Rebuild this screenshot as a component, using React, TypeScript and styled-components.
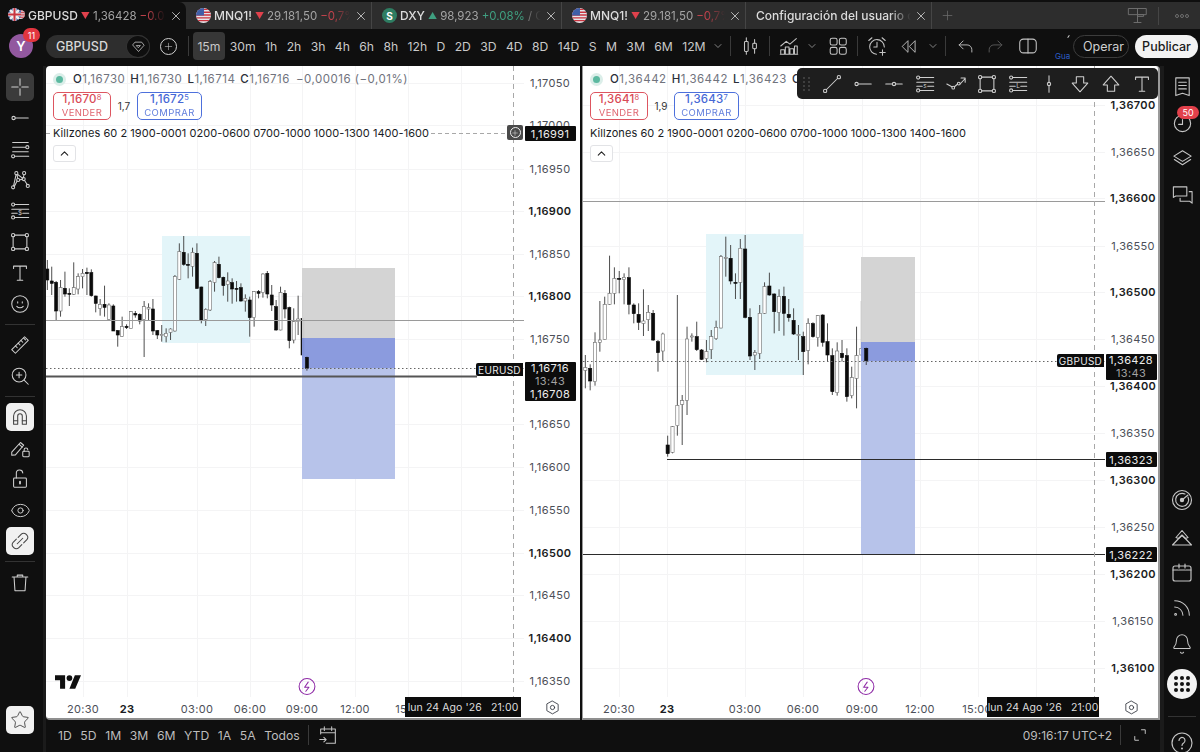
import React, { useId } from "react";
import styled, { createGlobalStyle } from "styled-components";
import { ChevronDown, ChevronUp, X, Plus, Star, Eye, Bell, Rss } from "lucide-react";

const GlobalStyle = createGlobalStyle`
  html, body {
    margin: 0;
    padding: 0;
    background: #0f0f0f;
    overflow: hidden;
  }
  * {
    box-sizing: border-box;
  }
`;

const Page = styled.div`
  width: 1200px;
  height: 752px;
  display: flex;
  flex-direction: column;
  background: #0f0f0f;
  font-family: Inter, "Liberation Sans", sans-serif;
  color: #d6d6d6;
  overflow: hidden;
`;

/* ---------- tabs ---------- */

const TabBar = styled.div`
  height: 29px;
  flex: none;
  display: flex;
  align-items: stretch;
  background: #2d2d2d;
  border-top: 2px solid #0f0f0f;
`;

const Tab = styled.div<{ $w: number; $active?: boolean }>`
  width: ${({ $w }) => $w}px;
  flex: none;
  display: flex;
  align-items: center;
  gap: 3px;
  padding: 0 3px 0 ${({ $active }) => ($active ? 8 : 10)}px;
  font-size: 12px;
  font-weight: 500;
  white-space: nowrap;
  position: relative;
  background: ${({ $active }) => ($active ? "#0f0f0f" : "transparent")};
  border-top-right-radius: ${({ $active }) => ($active ? "7px" : "0")};
  border-right: ${({ $active }) => ($active ? "none" : "1px solid #454545")};
`;

const TabText = styled.div`
  flex: 1;
  min-width: 0;
  overflow: hidden;
  display: flex;
  gap: 3px;
  align-items: center;
  color: #d0d0d0;
  -webkit-mask-image: linear-gradient(to right, #000 86%, transparent 100%);
  mask-image: linear-gradient(to right, #000 86%, transparent 100%);
`;

const TabSymbol = styled.span`
  color: #dcdcdc;
`;

const TabPrice = styled.span`
  color: #a4a4a4;
  font-weight: 400;
  font-size: 11.5px;
`;

const TabChange = styled.span<{ $up?: boolean }>`
  color: ${({ $up }) => ($up ? "#3f9f80" : "#c4434d")};
  font-weight: 400;
  font-size: 11.5px;
`;

const Arrow = styled.span<{ $up?: boolean }>`
  font-size: 9px;
  color: ${({ $up }) => ($up ? "#3f9f80" : "#e0414c")};
`;

const TabClose = styled.div`
  flex: none;
  display: flex;
  color: #d4d4d4;
`;

const TabAdd = styled.div`
  width: 30px;
  display: flex;
  align-items: center;
  justify-content: center;
  color: #6c6c6c;
`;

const TabBarEnd = styled.div`
  margin-left: auto;
  display: flex;
  align-items: center;
  color: #6f6f6f;
`;

const TabBarDivider = styled.div`
  width: 1px;
  height: 18px;
  background: #454545;
  margin: 0 16px 0 10px;
`;

const MoreDots = styled.div`
  display: flex;
  gap: 1px;
  margin-right: 11px;
`;

const MoreDot = styled.span`
  width: 4px;
  height: 4px;
  border: 1px solid #6f6f6f;
  border-radius: 50%;
`;

const CoinRow = styled.div`
  position: relative;
  flex: none;
  width: 17px;
  height: 17px;
`;

const CoinBack = styled.div`
  position: absolute;
  right: 0;
  top: 0;
`;

const CoinFront = styled.div`
  position: absolute;
  left: 0;
  bottom: 0;
`;

const DollarCoin = styled.div`
  width: 15px;
  height: 15px;
  flex: none;
  border-radius: 50%;
  background: #2e7d62;
  color: #fff;
  font-size: 10px;
  font-weight: 700;
  display: flex;
  align-items: center;
  justify-content: center;
`;

/* ---------- top toolbar ---------- */

const Toolbar = styled.div`
  height: 34px;
  flex: none;
  display: flex;
  align-items: center;
  padding: 0 4px 0 9px;
  margin-bottom: 3px;
`;

const AvatarWrap = styled.div`
  position: relative;
  width: 24px;
  height: 24px;
  flex: none;
  margin-right: 13px;
`;

const Avatar = styled.div`
  width: 24px;
  height: 24px;
  border-radius: 50%;
  background: #92589f;
  color: #fff;
  font-size: 13px;
  font-weight: 600;
  display: flex;
  align-items: center;
  justify-content: center;
`;

const AvatarBadge = styled.div`
  position: absolute;
  top: -6px;
  left: 14px;
  width: 17px;
  height: 14px;
  border-radius: 7px;
  background: #e2353f;
  color: #fff;
  font-size: 9px;
  display: flex;
  align-items: center;
  justify-content: center;
`;

const SymbolPill = styled.div`
  width: 104px;
  height: 23px;
  flex: none;
  display: flex;
  align-items: center;
  justify-content: space-between;
  border-radius: 12px;
  background: #2e2e2e;
  padding-left: 10px;
  font-size: 12.5px;
  font-weight: 500;
  color: #d8d8d8;
`;

const SymbolGem = styled.div`
  width: 24px;
  height: 23px;
  border-radius: 50%;
  background: #0f0f0f;
  border: 1px solid #333;
  display: flex;
  align-items: center;
  justify-content: center;
  color: #d8d8d8;
`;

const AddCircle = styled.div`
  width: 17px;
  height: 17px;
  border: 1px solid #d0d0d0;
  border-radius: 50%;
  margin: 0 11px 0 10px;
  flex: none;
  display: flex;
  align-items: center;
  justify-content: center;
  color: #d0d0d0;
`;

const Separator = styled.div<{ $gap?: number }>`
  width: 1px;
  height: 20px;
  flex: none;
  background: #3a3a3a;
  margin: 0 ${({ $gap }) => $gap ?? 4}px;
`;

const Frames = styled.div`
  display: flex;
  align-items: center;
  margin-left: 4px;
`;

const Frame = styled.div<{ $on?: boolean }>`
  height: 28px;
  display: flex;
  align-items: center;
  padding: 0 ${({ $on }) => ($on ? "4.4px" : "4.4px")};
  border-radius: 4px;
  font-size: 12.2px;
  color: #c9c9c9;
  white-space: nowrap;
  background: ${({ $on }) => ($on ? "#373737" : "transparent")};
  & + & {
    margin-left: 0.6px;
  }
`;

const ToolIcon = styled.div<{ $w?: number; $ml?: number; $faded?: boolean }>`
  width: ${({ $w }) => $w ?? 30}px;
  height: 28px;
  flex: none;
  margin-left: ${({ $ml }) => $ml ?? 0}px;
  display: flex;
  align-items: center;
  justify-content: center;
  color: ${({ $faded }) => ($faded ? "#5c5c5c" : "#c4c4c4")};
`;

const SmallChevron = styled(ChevronDown)`
  color: #a8a8a8;
`;

const GuideMark = styled.div`
  width: 18px;
  margin-left: 12px;
  height: 30px;
  position: relative;
  flex: none;
  display: flex;
  align-items: flex-end;
  color: #2c5ec9;
  font-size: 8px;
`;

const GuideTick = styled.span`
  position: absolute;
  top: 4px;
  right: 4px;
  width: 1px;
  height: 3px;
  background: #cfcfcf;
  transform: rotate(35deg);
`;

const TradeButton = styled.div`
  margin-left: auto;
  height: 23px;
  padding: 0 9px;
  display: flex;
  align-items: center;
  border: 1px solid #3c3c3c;
  border-radius: 12px;
  font-size: 12.5px;
  color: #cfcfcf;
  width: 56px;
  flex: none;
`;

const PublishButton = styled.div`
  margin-left: 6px;
  width: 63px;
  height: 23px;
  display: flex;
  align-items: center;
  justify-content: center;
  border-radius: 12px;
  background: #f3f3f3;
  font-size: 12.5px;
  font-weight: 500;
  color: #1a1a1a;
  flex: none;
`;

/* ---------- body ---------- */

const Body = styled.div`
  flex: 1;
  min-height: 0;
  display: flex;
`;

const LeftRail = styled.div`
  width: 46px;
  flex: none;
  display: flex;
  flex-direction: column;
  align-items: center;
  gap: 3px;
  padding: 7px 3px 18px 0;
  border-right: 3px solid #1b1b1b;
`;

const RailButton = styled.div<{ $state?: "dark" | "light" }>`
  width: 28px;
  height: 28px;
  flex: none;
  display: flex;
  align-items: center;
  justify-content: center;
  border-radius: 5px;
  color: ${({ $state }) => ($state === "light" ? "#444" : "#cfcfcf")};
  background: ${({ $state }) =>
    $state === "light" ? "#f1f1f1" : $state === "dark" ? "#3b3b3b" : "transparent"};
`;

const RailLine = styled.div`
  width: 30px;
  height: 1px;
  flex: none;
  margin: 3px 0;
  background: #333;
`;

const RailBottom = styled.div`
  margin-top: auto;
`;

const Center = styled.div`
  width: 1114px;
  flex: none;
  display: flex;
  flex-direction: column;
`;

const Charts = styled.div`
  height: 654px;
  flex: none;
  display: flex;
  gap: 2px;
`;

const Pane = styled.div<{ $w: number; $axis: number; $framed?: boolean }>`
  width: ${({ $w }) => $w}px;
  flex: none;
  position: relative;
  display: grid;
  grid-template-columns: 1fr ${({ $axis }) => $axis}px;
  grid-template-rows: 1fr 21px;
  background: #fff;
  color: #131722;
  border-bottom: 2px solid #8f8f8f;
  border-left: ${({ $framed }) => ($framed ? "1px solid #9a9a9a" : "none")};
  border-right: ${({ $framed }) => ($framed ? "2px solid #9a9a9a" : "none")};
  border-radius: ${({ $framed }) => ($framed ? "0 4px 0 0" : "4px 0 0 4px")};
`;

const Plot = styled.div`
  position: relative;
  min-width: 0;
  overflow: hidden;
`;

const PlotSvg = styled.svg`
  display: block;
  width: 100%;
  height: 100%;
`;

const Legend = styled.div`
  position: absolute;
  left: 0;
  top: 0;
  right: 0;
  padding: 4px 0 0 7px;
  display: flex;
  flex-direction: column;
  align-items: flex-start;
`;

const OhlcRow = styled.div`
  height: 18px;
  display: flex;
  align-items: center;
  white-space: nowrap;
  font-size: 11.5px;
  letter-spacing: 0.5px;
  color: #70737d;
`;

const StatusDot = styled.span`
  width: 13px;
  height: 13px;
  border-radius: 50%;
  background: #5cb9a0;
  border: 3px solid #dbeee9;
  margin-right: 7px;
  flex: none;
`;

const OhlcKey = styled.b`
  font-weight: 500;
  color: #2a2e39;
  margin-left: 5px;
  &:first-of-type {
    margin-left: 0;
  }
`;

const OhlcChange = styled.span`
  margin-left: 6px;
`;

const TradeRow = styled.div`
  display: flex;
  align-items: center;
  margin-top: 4px;
  height: 28px;
`;

const QuoteBox = styled.div<{ $buy?: boolean }>`
  width: ${({ $buy }) => ($buy ? 65 : 58)}px;
  height: 28px;
  border: 1px solid ${({ $buy }) => ($buy ? "#4d70dc" : "#dd5560")};
  border-radius: 5px;
  color: ${({ $buy }) => ($buy ? "#4668d6" : "#d94a56")};
  display: flex;
  flex-direction: column;
  align-items: center;
  justify-content: center;
  font-size: 11.5px;
  font-weight: 500;
  letter-spacing: 0.2px;
  line-height: 13px;
  background: #fff;
`;

const QuoteTail = styled.sup`
  font-size: 7.5px;
  line-height: 0;
  font-weight: 400;
  vertical-align: 3px;
`;

const QuoteLabel = styled.span`
  font-size: 9.5px;
  font-weight: 400;
  letter-spacing: 0.4px;
  opacity: 0.85;
`;

const Spread = styled.span`
  width: 26px;
  text-align: center;
  font-size: 10px;
  color: #333;
`;

const StudyRow = styled.div`
  margin-top: 5px;
  height: 16px;
  display: flex;
  align-items: center;
  font-size: 11px;
  letter-spacing: 0.05px;
  color: #191c24;
  white-space: nowrap;
`;

const CollapseButton = styled.div`
  margin-top: 4px;
  width: 23px;
  height: 17px;
  border: 1px solid #e2e3e6;
  border-radius: 3px;
  background: #fff;
  display: flex;
  align-items: center;
  justify-content: center;
  color: #222;
`;

const PriceAxis = styled.div`
  position: relative;
  min-width: 0;
`;

const PriceLabel = styled.div<{ $bold?: boolean; $nudge: number }>`
  position: absolute;
  left: ${({ $nudge }) => Math.max($nudge, 0)}px;
  right: ${({ $nudge }) => Math.max(-$nudge, 0)}px;
  text-align: center;
  transform: translateY(-50%);
  font-size: 11px;
  letter-spacing: 0.35px;
  line-height: 14px;
  font-weight: ${({ $bold }) => ($bold ? 600 : 400)};
  color: ${({ $bold }) => ($bold ? "#1a1c22" : "#4c4f58")};
`;

const PriceTag = styled.div`
  position: absolute;
  left: 0.5px;
  width: 51px;
  height: 15px;
  background: #0c0c0c;
  color: #ececec;
  font-size: 11px;
  letter-spacing: 0.35px;
  display: flex;
  align-items: center;
  justify-content: center;
  border-radius: 1px;
`;

const PriceStack = styled.div`
  position: absolute;
  left: 0.5px;
  width: 51px;
  background: #0c0c0c;
  color: #ececec;
  font-size: 11px;
  letter-spacing: 0.35px;
  line-height: 13px;
  padding: 0;
  text-align: center;
  border-radius: 1px;
`;

const StackDim = styled.div`
  color: #a3a3a3;
`;

const SymbolTag = styled.div`
  position: absolute;
  right: 1px;
  width: 47px;
  height: 13px;
  background: #0c0c0c;
  color: #e8e8e8;
  font-size: 10px;
  letter-spacing: 0.3px;
  display: flex;
  align-items: center;
  justify-content: center;
  border-radius: 2px 0 0 2px;
`;

const CrossPlus = styled.div`
  position: absolute;
  right: 1px;
  top: 59px;
  width: 16px;
  height: 15px;
  background: #4a4a4a;
  border-radius: 2px;
  display: flex;
  align-items: center;
  justify-content: center;
  color: #eee;
`;

const CrossPlusRing = styled.div`
  width: 11px;
  height: 11px;
  border: 1px solid #eee;
  border-radius: 50%;
  display: flex;
  align-items: center;
  justify-content: center;
`;

const PlotMark = styled.div`
  position: absolute;
  bottom: 1px;
  transform: translateX(-50%);
  display: flex;
  color: #8e2aa6;
`;

const LogoMark = styled.div`
  position: absolute;
  left: 9px;
  bottom: 8px;
  display: flex;
  color: #101010;
`;

const TimeAxis = styled.div`
  position: relative;
  min-width: 0;
`;

const TimeLabel = styled.div<{ $bold?: boolean }>`
  position: absolute;
  top: 5px;
  transform: translateX(-50%);
  font-size: 11px;
  letter-spacing: 0.3px;
  line-height: 14px;
  white-space: nowrap;
  font-weight: ${({ $bold }) => ($bold ? 700 : 400)};
  color: ${({ $bold }) => ($bold ? "#1a1c22" : "#4c4f58")};
`;

const TimeTag = styled.div`
  position: absolute;
  top: 0;
  height: 20px;
  background: #0c0c0c;
  color: #dedede;
  font-size: 10.5px;
  letter-spacing: 0.1px;
  display: flex;
  align-items: center;
  justify-content: center;
  gap: 9px;
  white-space: nowrap;
`;

const AxisCorner = styled.div`
  display: flex;
  align-items: center;
  justify-content: center;
  color: #33363f;
`;

const FloatingBar = styled.div`
  position: absolute;
  right: 0;
  top: 2px;
  width: 361px;
  height: 31px;
  display: flex;
  align-items: center;
  padding-left: 6px;
  border-radius: 5px;
  background: #1e1e1e;
  color: #cfcfcf;
  z-index: 2;
`;

const Grip = styled.div`
  width: 9px;
  margin-right: 4px;
  display: grid;
  grid-template-columns: 2px 2px;
  gap: 2px 3px;
`;

const GripDot = styled.span`
  width: 2px;
  height: 2px;
  background: #4a4a4a;
  border-radius: 50%;
`;

const FloatingItem = styled.div`
  width: 31px;
  height: 31px;
  flex: none;
  display: flex;
  align-items: center;
  justify-content: center;
`;

const BottomBar = styled.div`
  flex: 1;
  display: flex;
  align-items: center;
  padding: 0 5px 2px 12px;
  color: #bdbdbd;
  font-size: 12.2px;
`;

const Range = styled.span`
  margin-right: 8.6px;
`;

const BottomClock = styled.span`
  margin-left: auto;
  margin-right: 4px;
  font-size: 12px;
`;

const RightRail = styled.div`
  width: 40px;
  flex: none;
  display: flex;
  flex-direction: column;
  align-items: center;
  padding-top: 2px;
  border-left: 4px solid #1b1b1b;
  color: #c6c6c6;
  overflow: hidden;
`;

const SideIcon = styled.div`
  width: 34px;
  height: 36px;
  flex: none;
  position: relative;
  display: flex;
  align-items: center;
  justify-content: center;
`;

const SideBadge = styled.div`
  position: absolute;
  top: 2px;
  right: 0;
  width: 22px;
  height: 13px;
  border-radius: 7px;
  background: #e2404b;
  color: #fff;
  font-size: 9px;
  display: flex;
  align-items: center;
  justify-content: center;
`;

const SideBottom = styled.div`
  margin-top: auto;
  display: flex;
  flex-direction: column;
  align-items: center;
  margin-bottom: -9px;
`;

const GridButton = styled.div`
  width: 30px;
  height: 30px;
  margin-top: 7px;
  border-radius: 50%;
  background: #f2f2f2;
  display: grid;
  grid-template-columns: repeat(3, 4px);
  gap: 2px;
  align-content: center;
  justify-content: center;
`;

const GridDot = styled.span`
  width: 4px;
  height: 4px;
  border-radius: 50%;
  background: #111;
`;

const SideLine = styled.div`
  width: 28px;
  height: 1px;
  background: #333;
  margin: 17px 0 8px;
`;

/* ---------- icons ---------- */

const Ico = ({ size = 22, sw = 1.15, children }: { size?: number; sw?: number; children: React.ReactNode }) => (
  <svg width={size} height={size} viewBox="0 0 24 24" fill="none" stroke="currentColor" strokeWidth={sw} strokeLinecap="round" strokeLinejoin="round">
    {children}
  </svg>
);

const CrossIcon = () => (
  <Ico><path d="M12 3v7M12 14v7M3 12h7M14 12h7" /></Ico>
);
const RayIcon = () => (
  <Ico><circle cx="5" cy="12" r="1.8" /><path d="M7 12h14" /></Ico>
);
const MidLineIcon = () => (
  <Ico><circle cx="12" cy="12" r="1.8" /><path d="M3 12h7M14 12h7" /></Ico>
);
const ChannelIcon = () => (
  <Ico>
    <path d="M4 5h17M4 10h14M4 15h17M6.5 20h15" />
    <circle cx="20" cy="10" r="1.7" />
    <circle cx="4.5" cy="20" r="1.7" />
  </Ico>
);
const PatternIcon = () => (
  <Ico>
    <circle cx="4.5" cy="20" r="1.7" /><circle cx="8" cy="4.5" r="1.7" /><circle cx="10" cy="12" r="1.7" />
    <circle cx="16.5" cy="4.5" r="1.7" /><circle cx="16" cy="11" r="1.7" /><circle cx="20.5" cy="18.5" r="1.7" />
    <path d="M5 18.4 7.7 6.2M8.7 6 9.6 10.4M5.800 19 8.800 13.200M11.600 11.800l2.800-.5M15.600 9.400l.8-3.200M17 12.500 19.800 17M9.500 6l5.600 4.200" />
  </Ico>
);
const FibIcon = ({ letter = "$" }: { letter?: string }) => (
  <Ico>
    <circle cx="4.5" cy="5" r="1.7" /><circle cx="4.5" cy="19" r="1.7" />
    <path d="M6.5 5h15M3 10h18.5M3 14.5h6M15 14.5h6.5M6.5 19h15" />
    <text x="12" y="16.8" fontSize="7" textAnchor="middle" fill="currentColor" stroke="none" fontFamily="Inter, sans-serif">{letter}</text>
  </Ico>
);
const RectIcon = () => (
  <Ico>
    <circle cx="4.5" cy="4.5" r="1.8" /><circle cx="19.5" cy="4.5" r="1.8" />
    <circle cx="4.5" cy="19.5" r="1.8" /><circle cx="19.5" cy="19.5" r="1.8" />
    <path d="M6.3 4.5h11.400M6.300 19.500h11.400M4.500 6.300v11.400M19.500 6.300v11.400" />
  </Ico>
);
const TextIcon = () => (
  <Ico><path d="M5 7V4.5h14V7M12 4.5v15.5M9 20h6" /></Ico>
);
const SmileIcon = () => (
  <Ico>
    <circle cx="12" cy="12" r="9" />
    <path d="M8.5 14.5c1.8 2.2 5.2 2.2 7 0M9.5 9.5v1.5M14.5 9.5v1.5" />
  </Ico>
);
const RulerIcon = () => (
  <Ico>
    <path d="m3 17 14-14 4 4L7 21z" />
    <path d="m7 13 2 2M10 10l2 2M13 7l2 2M16 4.5l2 2" />
  </Ico>
);
const ZoomIcon = () => (
  <Ico>
    <circle cx="11" cy="11" r="7.5" />
    <path d="m16.5 16.5 4.5 4.5M11 8v6M8 11h6" />
  </Ico>
);
const MagnetIcon = () => (
  <Ico>
    <path d="M5 20V11a7 7 0 0 1 14 0v9h-4.5v-9a2.5 2.5 0 0 0-5 0v9z" />
    <path d="M5 16h4.5M14.5 16H19" />
  </Ico>
);
const PencilLockIcon = () => (
  <Ico>
    <path d="m3 16.5 9.500-10.500 3.500 3L7 19.500l-4 .5z" />
    <path d="M11 8l3.500 3" />
    <rect x="15" y="15.5" width="7" height="6" rx="1" />
    <path d="M16.5 15.5V14a2 2 0 0 1 4 0" />
  </Ico>
);
const LockOpenIcon = () => (
  <Ico>
    <rect x="5" y="11" width="14" height="10" rx="1" />
    <path d="M8 11V6a3.5 3.5 0 0 1 7-.5" />
    <path d="M12 15v2" strokeWidth="2" />
  </Ico>
);
const LinkIcon = () => (
  <Ico>
    <path d="m10 8 3.500-3.500a3.500 3.500 0 0 1 5 0l1 1a3.500 3.500 0 0 1 0 5L16 14" />
    <path d="m14 16-3.500 3.500a3.500 3.500 0 0 1-5 0l-1-1a3.500 3.500 0 0 1 0-5L8 10" />
    <path d="m9 15 6-6" />
  </Ico>
);
const TrashIcon = () => (
  <Ico>
    <path d="M3.5 6.5h17M9 6.5V4.5h6v2M5.5 6.5l1 15h11l1-15" />
  </Ico>
);
const ListBookIcon = () => (
  <Ico size={23}>
    <path d="M5 21.5V3h14v18.5l-7-2.500z" />
    <path d="M8 7.5h8M8 11h8M8 14.5h8" />
  </Ico>
);
const TimerIcon = () => (
  <Ico size={23}>
    <circle cx="12" cy="13" r="8.5" />
    <path d="M12 9v5H8" />
  </Ico>
);
const LayersIcon = () => (
  <Ico size={23}>
    <path d="m12 4 9 5.500-9 5.500-9-5.500z" />
    <path d="m3.500 13 8.500 5.500 8.500-5.500" />
  </Ico>
);
const ChatIcon = () => (
  <Ico size={23}>
    <path d="M16.5 13.5V4H2.500v11l2.500-1.500z" />
    <path d="M19 9h3v12l-2.500-2H9.500v-3" />
  </Ico>
);
const RadarIcon = () => (
  <Ico size={24}>
    <circle cx="12" cy="12" r="9.5" />
    <path d="M18 9a6.500 6.500 0 1 1-3-3" />
    <path d="m12 12 6-5" />
    <circle cx="12" cy="12" r="1.6" fill="currentColor" />
  </Ico>
);
const PyramidIcon = () => (
  <Ico size={24}>
    <path d="M2.500 21 12 11l9.500 10zM2.500 21h19" />
    <path d="m6 13.500 6-7 6 7-2.500 1-3.500-3-3.500 3z" />
  </Ico>
);
const CalendarIcon = () => (
  <Ico size={24}>
    <rect x="3" y="6" width="18" height="15" rx="2" />
    <path d="M3 10h5M16 10h5M9 4v4M15 4v4M9 10h6" />
  </Ico>
);
const HelpIcon = () => (
  <Ico size={24}>
    <circle cx="12" cy="12" r="10" />
    <path d="M9 9.500a3 3 0 1 1 4.600 2.500c-1 .6-1.600 1.200-1.600 2.500" />
    <path d="M12 17.500v.1" strokeWidth="2" />
  </Ico>
);
const GemIcon = () => (
  <Ico size={15}>
    <path d="M7 5h10l4 5-9 10-9-10z" />
    <path d="M9 10.500h6l-3 3z" />
  </Ico>
);
const MonitorIcon = () => (
  <Ico size={21} sw={1.1}>
    <rect x="2" y="4" width="20" height="7" />
    <path d="M12 4v16M8 20h8M12 11h7v2h-7" />
  </Ico>
);
const CandlesIcon = () => (
  <Ico>
    <rect x="6" y="7" width="4" height="11" rx="1" />
    <path d="M8 3v4M8 18v3" />
    <rect x="15" y="9" width="4" height="6" rx="1" />
    <path d="M17 5v4M17 15v5" />
  </Ico>
);
const IndicatorIcon = () => (
  <Ico>
    <path d="m3 12 6-5 4 3 7-6" />
    <path d="M3 21v-5h4v5M8 21v-8h4v8M13 21v-6h4v6M18 21v-9h3v9M2.500 21h19" />
  </Ico>
);
const LayoutIcon = () => (
  <Ico>
    <rect x="3.500" y="3.500" width="7.500" height="7.500" rx="2" />
    <rect x="13.500" y="3.500" width="7.500" height="7.500" rx="2" />
    <rect x="3.500" y="13.500" width="7.500" height="7.500" rx="2" />
    <rect x="13.500" y="13.500" width="7.500" height="7.500" rx="2" />
  </Ico>
);
const AlarmIcon = () => (
  <Ico>
    <path d="M20 13a8 8 0 1 0-8.500 8" />
    <path d="M12 8v5H8.500M3 6l3.500-3M21 6l-3.500-3M18 16v6M15 19h6" />
  </Ico>
);
const RewindIcon = () => (
  <Ico size={19}>
    <path d="m11 5-7 7 7 7zM20 5l-7 7 7 7z" />
  </Ico>
);
const UndoIcon = () => (
  <Ico size={19}>
    <path d="M9 5 4 10l5 5M4 10h10a6 6 0 0 1 6 6v3" />
  </Ico>
);
const RedoIcon = () => (
  <Ico size={19}>
    <path d="m15 5 5 5-5 5M20 10H10a6 6 0 0 0-6 6v3" />
  </Ico>
);
const SplitIcon = () => (
  <Ico>
    <rect x="3" y="4.500" width="18" height="15" rx="4" />
    <path d="M12 4.500v15" />
  </Ico>
);
const MenuChevron = () => <SmallChevron size={12} strokeWidth={1.5} />;
const RangeCalendarIcon = () => (
  <Ico>
    <path d="M4 11V5.500h16V21H10M4 9.500h16M8 3v4M16 3v4M3 17h7M7.500 14.500 10 17l-2.500 2.500" />
  </Ico>
);
const ExpandIcon = () => (
  <Ico size={18} sw={1.3}><path d="M14 5h5v5M5 14v5h5" /></Ico>
);
const GearIcon = () => (
  <Ico size={17} sw={1.2}>
    <path d="m12 3 8 4.500v9L12 21l-8-4.500v-9z" />
    <circle cx="12" cy="12" r="3" />
  </Ico>
);
const BoltIcon = () => (
  <Ico size={19} sw={1.3}>
    <circle cx="12" cy="12" r="10" />
    <path d="m13.500 6.500-4.500 6.500h5.500l-4 5" />
  </Ico>
);
const DownIcon = () => (
  <Ico><path d="M8 4h8v7h4.500L12 20.500 3.500 11H8z" /></Ico>
);
const UpIcon = () => (
  <Ico><path d="M8 20h8v-7h4.500L12 3.500 3.500 13H8z" /></Ico>
);
const TrendLineIcon = () => (
  <Ico>
    <circle cx="4.500" cy="19.500" r="1.800" /><circle cx="19.500" cy="4.500" r="1.800" />
    <path d="M6 18 18 6" />
  </Ico>
);
const ZigzagIcon = () => (
  <Ico>
    <circle cx="9" cy="16" r="1.500" /><circle cx="15" cy="11.500" r="1.500" />
    <path d="m2 12 5.500 3M10.300 15l3.500-3M16.500 12 22 6M17.500 5.500H22V10" />
  </Ico>
);
const VLineIcon = () => (
  <Ico><path d="M12 3v7M12 14v7" /><circle cx="12" cy="12" r="1.800" /></Ico>
);
const TvLogo = () => (
  <svg width="26" height="14" viewBox="0 0 36 19" fill="currentColor">
    <path d="M14 19H7V7H0V0h14v19zM28 19h-8L27.500 0h8.500L28 19z" />
    <circle cx="20" cy="4" r="4" />
  </svg>
);

const FlagUS = ({ size = 15 }: { size?: number }) => {
  const id = useId();
  return (
    <svg width={size} height={size} viewBox="0 0 16 16">
      <clipPath id={id}><circle cx="8" cy="8" r="8" /></clipPath>
      <g clipPath={`url(#${id})`}>
        <rect width="16" height="16" fill="#e6e6ea" />
        <path d="M0 1.500h16M0 4.500h16M0 7.500h16M0 10.500h16M0 13.500h16" stroke="#c9343f" strokeWidth="1.500" />
        <rect width="8.500" height="8" fill="#3f5fa8" />
      </g>
    </svg>
  );
};

const FlagUK = ({ size = 13 }: { size?: number }) => {
  const id = useId();
  return (
    <svg width={size} height={size} viewBox="0 0 16 16">
      <clipPath id={id}><circle cx="8" cy="8" r="8" /></clipPath>
      <g clipPath={`url(#${id})`}>
        <rect width="16" height="16" fill="#2f4e96" />
        <path d="M0 0 16 16M16 0 0 16" stroke="#eee" strokeWidth="3" />
        <path d="M8 0v16M0 8h16" stroke="#eee" strokeWidth="5" />
        <path d="M8 0v16M0 8h16" stroke="#c9343f" strokeWidth="2.500" />
      </g>
    </svg>
  );
};

/* ---------- chart data ---------- */

type Candle = [number, number, number, number, number];

const leftCandles: Candle[] = [
  [105, 132, 165, 195, 1], [125, 168, 175, 210, 1], [168, 172, 258, 288, 1], [165, 188, 258, 275, 0],
  [140, 190, 207, 215, 1], [190, 205, 207, 243, 1], [112, 188, 208, 210, 0], [145, 155, 192, 208, 0],
  [132, 145, 155, 190, 0], [128, 142, 146, 210, 1], [133, 143, 212, 215, 1], [212, 213, 235, 262, 1],
  [222, 238, 250, 272, 0], [182, 238, 247, 275, 1], [235, 240, 284, 285, 0], [238, 243, 318, 318, 1],
  [315, 317, 330, 365, 1], [275, 305, 334, 335, 0], [298, 304, 308, 312, 1], [258, 260, 310, 310, 0],
  [258, 265, 270, 278, 1], [265, 268, 288, 298, 1], [228, 245, 284, 396, 0], [235, 248, 252, 285, 0],
  [222, 252, 318, 330, 1], [315, 317, 330, 342, 1], [300, 328, 332, 350, 0], [310, 325, 335, 352, 0],
  [310, 312, 322, 345, 0], [150, 155, 318, 320, 0], [55, 80, 163, 165, 0], [33, 82, 118, 122, 1],
  [85, 118, 121, 160, 1], [68, 82, 124, 155, 0], [55, 85, 190, 192, 1], [185, 186, 285, 295, 1],
  [250, 253, 283, 303, 0], [165, 170, 255, 258, 0], [108, 113, 172, 200, 0], [95, 118, 158, 160, 1],
  [155, 157, 182, 212, 1], [142, 168, 178, 230, 0], [160, 173, 192, 236, 1], [168, 190, 192, 230, 1],
  [175, 188, 228, 230, 1], [208, 220, 228, 260, 0], [215, 225, 278, 335, 1], [198, 200, 278, 305, 0],
  [195, 200, 205, 220, 1], [145, 147, 203, 218, 0], [138, 145, 207, 220, 1], [180, 210, 240, 258, 1],
  [225, 245, 315, 317, 1], [185, 203, 315, 316, 0], [195, 205, 252, 280, 1], [245, 248, 347, 370, 1],
  [250, 290, 345, 355, 0], [212, 282, 290, 330, 0], [203, 280, 390, 400, 1], [395, 397, 430, 437, 1],
];

const rightCandles: Candle[] = [
  [390, 428, 436, 490, 0], [418, 430, 468, 496, 1], [322, 352, 470, 482, 0], [228, 345, 352, 380, 0],
  [215, 238, 344, 345, 0], [92, 205, 238, 240, 0], [127, 160, 205, 238, 0], [138, 160, 163, 205, 1],
  [145, 157, 164, 238, 0], [127, 158, 238, 268, 1], [235, 240, 266, 295, 1], [235, 268, 292, 315, 1],
  [193, 288, 295, 333, 0], [240, 262, 284, 318, 0], [255, 265, 345, 348, 1], [345, 350, 383, 440, 1],
  [323, 327, 378, 408, 0], [632, 660, 686, 695, 1], [603, 605, 682, 685, 0], [210, 541, 602, 632, 0],
  [510, 527, 538, 660, 0], [305, 342, 526, 570, 0], [325, 333, 335, 350, 0], [290, 335, 374, 378, 1],
  [372, 375, 403, 405, 1], [345, 380, 401, 412, 0], [315, 335, 373, 402, 0], [287, 307, 341, 345, 0],
  [90, 95, 309, 310, 0], [35, 97, 100, 155, 0], [60, 100, 168, 178, 1], [145, 172, 175, 222, 1],
  [42, 70, 172, 222, 0], [30, 72, 277, 280, 1], [250, 277, 393, 405, 1], [375, 383, 390, 435, 0],
  [240, 265, 385, 402, 0], [172, 185, 265, 267, 0], [143, 183, 210, 212, 1], [205, 207, 260, 325, 1],
  [193, 215, 262, 318, 0], [185, 214, 265, 332, 1], [222, 268, 278, 290, 1], [250, 286, 327, 330, 1],
  [300, 328, 332, 405, 0], [320, 335, 380, 450, 1], [280, 295, 376, 418, 0], [292, 296, 335, 338, 1],
  [270, 272, 338, 365, 0], [268, 270, 352, 365, 1], [295, 350, 390, 408, 1], [370, 392, 500, 510, 1],
  [352, 378, 503, 512, 0], [345, 385, 398, 410, 1], [370, 392, 515, 530, 1], [425, 458, 512, 520, 0],
  [305, 392, 460, 550, 0], [228, 370, 390, 392, 0], [368, 370, 407, 420, 1],
];

interface Rect { x: number; y: number; w: number; h: number; fill: string }
interface HLine { y: number; from: number; to: number; color: string; width?: number; dash?: string }
interface ChartConfig {
  x: number;
  width: number;
  axis: number;
  framed?: boolean;
  plotEnd: number;
  nudge: number;
  quote: { sell: string; sellTail: string; buy: string; buyTail: string; spread: string };
  ohlc: [string, string, string, string, string];
  candles: Candle[];
  candleOrigin: { base: number; x: number; step: number; width: number };
  prices: { y: number; text: string; bold?: boolean }[];
  times: { x: number; text: string; bold?: boolean }[];
  grid: number[];
  rects: Rect[];
  lines: HLine[];
  crossX: number;
  tagX: number;
  tagWidth: number;
  boltX: number;
  priceTags: { y: number; text: string }[];
  stack: { y: number; rows: string[] };
  symbol: { y: number; text: string };
  logo?: boolean;
  crossY?: number;
}

const leftPrices = [
  [83, "1,17050"], [125, "1,17000"], [169, "1,16950"], [211, "1,16900", 1], [254, "1,16850"],
  [296, "1,16800", 1], [339, "1,16750"], [424, "1,16650"], [467, "1,16600"], [510, "1,16550"],
  [553, "1,16500", 1], [595, "1,16450"], [638, "1,16400", 1], [681, "1,16350"],
] as [number, string, number?][];

const rightPrices = [
  [105, "1,36700", 1], [152, "1,36650"], [198, "1,36600", 1], [246, "1,36550"], [292, "1,36500", 1],
  [339, "1,36450"], [386, "1,36400", 1], [433, "1,36350"], [480, "1,36300", 1], [527, "1,36250"],
  [574, "1,36200", 1], [621, "1,36150"], [668, "1,36100", 1],
] as [number, string, number?][];

const toPrices = (rows: [number, string, number?][]) =>
  rows.map(([y, text, bold]) => ({ y, text, bold: !!bold }));

const leftChart: ChartConfig = {
  x: 46,
  width: 534,
  axis: 56,
  plotEnd: 524,
  nudge: -4,
  quote: { sell: "1,1670", sellTail: "8", buy: "1,1672", buyTail: "5", spread: "1,7" },
  ohlc: ["1,16730", "1,16730", "1,16714", "1,16716", "−0,00016 (−0,01%)"],
  candles: leftCandles,
  candleOrigin: { base: 40, x: 22, step: 13.2, width: 3 },
  prices: toPrices(leftPrices),
  times: [
    { x: 83, text: "20:30" }, { x: 127, text: "23", bold: true }, { x: 197, text: "03:00" },
    { x: 250, text: "06:00" }, { x: 302, text: "09:00" }, { x: 355, text: "12:00" }, { x: 410, text: "15:00" },
  ],
  grid: [83, 127, 197, 250, 302, 355, 408, 461],
  rects: [
    { x: 162, y: 236, w: 88, h: 107, fill: "#e3f5f9" },
    { x: 302, y: 268, w: 93, h: 70, fill: "#d3d3d3" },
    { x: 302, y: 338, w: 93, h: 30, fill: "#8798dd" },
    { x: 302, y: 368, w: 93, h: 111, fill: "#b5c1e9" },
  ],
  lines: [
    { y: 320, from: 46, to: 524, color: "#9a9a9a" },
    { y: 368, from: 46, to: 524, color: "#666", dash: "1.5 2.5" },
    { y: 376, from: 46, to: 477, color: "#555", width: 2 },
    { y: 133, from: 46, to: 52, color: "#a8a8a8", dash: "4 3" },
    { y: 133, from: 431, to: 513, color: "#a8a8a8", dash: "4 3" },
  ],
  crossX: 513,
  tagX: 405,
  tagWidth: 116,
  boltX: 307,
  priceTags: [{ y: 126, text: "1,16991" }],
  stack: { y: 362, rows: ["1,16716", "13:43", "1,16708"] },
  symbol: { y: 363, text: "EURUSD" },
  logo: true,
  crossY: 133,
};

const rightChart: ChartConfig = {
  x: 583,
  width: 578,
  axis: 53,
  framed: true,
  plotEnd: 1105,
  nudge: 3,
  quote: { sell: "1,3641", sellTail: "8", buy: "1,3643", buyTail: "7", spread: "1,9" },
  ohlc: ["1,36442", "1,36442", "1,36423", "1,36428", "−0,00014 (−0,01%)"],
  candles: rightCandles,
  candleOrigin: { base: 582, x: 10, step: 14.53, width: 3.2 },
  prices: toPrices(rightPrices),
  times: [
    { x: 619, text: "20:30" }, { x: 667, text: "23", bold: true }, { x: 745, text: "03:00" },
    { x: 803, text: "06:00" }, { x: 862, text: "09:00" }, { x: 920, text: "12:00" }, { x: 977, text: "15:00" },
  ],
  grid: [619, 667, 745, 803, 862, 920, 978, 1036],
  rects: [
    { x: 706, y: 234, w: 97, h: 141, fill: "#e3f5f9" },
    { x: 861, y: 257, w: 54, h: 85, fill: "#d3d3d3" },
    { x: 861, y: 342, w: 54, h: 19, fill: "#8798dd" },
    { x: 861, y: 361, w: 54, h: 194, fill: "#b5c1e9" },
  ],
  lines: [
    { y: 201, from: 583, to: 1105, color: "#9a9a9a" },
    { y: 361, from: 583, to: 1105, color: "#666", dash: "1.5 2.5" },
    { y: 459, from: 667, to: 1105, color: "#2b2b2b" },
    { y: 554, from: 583, to: 1105, color: "#2b2b2b" },
  ],
  crossX: 1094,
  tagX: 987,
  tagWidth: 112,
  boltX: 866,
  priceTags: [{ y: 452, text: "1,36323" }, { y: 547, text: "1,36222" }],
  stack: { y: 354, rows: ["1,36428", "13:43"] },
  symbol: { y: 354, text: "GBPUSD" },
};

const TOP = 66;
const PLOT_HEIGHT = 631;

const Candles = ({ data, from, config }: { data: Candle[]; from: number; config: ChartConfig }) => {
  const { base, x: originX, step, width } = config.candleOrigin;
  return (
    <g>
      {data.map(([hi, top, bot, lo, dark], i) => {
        const x = base + (originX + step * (from + i)) / 3;
        const toY = (v: number) => 225 + v / 3;
        return (
          <g key={i}>
            <line x1={x} x2={x} y1={toY(hi)} y2={toY(lo)} stroke="#3a3a3a" strokeWidth="0.9" />
            <rect
              x={x - width / 2}
              y={toY(top)}
              width={width}
              height={Math.max(toY(bot) - toY(top), 1)}
              fill={dark ? "#0b0b0b" : "#ffffff"}
              stroke={dark ? "#0b0b0b" : "#6e6e6e"}
              strokeWidth="0.6"
            />
          </g>
        );
      })}
    </g>
  );
};

const ChartPane = ({ config, children }: { config: ChartConfig; children?: React.ReactNode }) => {
  const plotWidth = config.plotEnd - config.x;
  const last = config.candles.length - 1;
  return (
    <Pane $w={config.width} $axis={config.axis} $framed={config.framed}>
      <Plot>
        <PlotSvg viewBox={`${config.x} ${TOP} ${plotWidth} ${PLOT_HEIGHT}`} preserveAspectRatio="none">
          {config.prices.map((p) => (
            <line key={p.y} x1={config.x} x2={config.plotEnd} y1={p.y + 0.5} y2={p.y + 0.5} stroke="#f4f4f5" />
          ))}
          {config.grid.map((x) => (
            <line key={x} x1={x + 0.5} x2={x + 0.5} y1={TOP} y2={TOP + PLOT_HEIGHT} stroke="#f4f4f5" />
          ))}
          {config.rects.slice(0, 1).map((r) => (
            <rect key={r.x} x={r.x} y={r.y} width={r.w} height={r.h} fill={r.fill} />
          ))}
          <Candles data={config.candles} from={0} config={config} />
          {config.rects.slice(1).map((r) => (
            <rect key={r.y} x={r.x} y={r.y} width={r.w} height={r.h} fill={r.fill} fillOpacity="0.97" />
          ))}
          <Candles data={config.candles.slice(-1)} from={last} config={config} />
          {config.lines.map((l, i) => (
            <line
              key={i}
              x1={l.from}
              x2={l.to}
              y1={l.y + 0.5}
              y2={l.y + 0.5}
              stroke={l.color}
              strokeWidth={l.width ?? 1}
              strokeDasharray={l.dash}
            />
          ))}
          <line x1={config.crossX + 0.5} x2={config.crossX + 0.5} y1={TOP} y2={TOP + PLOT_HEIGHT} stroke="#a8a8a8" strokeDasharray="5 4" />
        </PlotSvg>
        {config.crossY && (
          <CrossPlus>
            <CrossPlusRing>
              <Plus size={8} strokeWidth={1.5} />
            </CrossPlusRing>
          </CrossPlus>
        )}
        <SymbolTag style={{ top: config.symbol.y - TOP }}>{config.symbol.text}</SymbolTag>
        <Legend>
          <OhlcRow>
            <StatusDot />
            <OhlcKey>O</OhlcKey>{config.ohlc[0]}
            <OhlcKey>H</OhlcKey>{config.ohlc[1]}
            <OhlcKey>L</OhlcKey>{config.ohlc[2]}
            <OhlcKey>C</OhlcKey>{config.ohlc[3]}
            <OhlcChange>{config.ohlc[4]}</OhlcChange>
          </OhlcRow>
          <TradeRow>
            <QuoteBox>
              <span>{config.quote.sell}<QuoteTail>{config.quote.sellTail}</QuoteTail></span>
              <QuoteLabel>VENDER</QuoteLabel>
            </QuoteBox>
            <Spread>{config.quote.spread}</Spread>
            <QuoteBox $buy>
              <span>{config.quote.buy}<QuoteTail>{config.quote.buyTail}</QuoteTail></span>
              <QuoteLabel>COMPRAR</QuoteLabel>
            </QuoteBox>
          </TradeRow>
          <StudyRow>Killzones 60 2 1900-0001 0200-0600 0700-1000 1000-1300 1400-1600</StudyRow>
          <CollapseButton>
            <ChevronUp size={13} strokeWidth={2} />
          </CollapseButton>
        </Legend>
        {config.logo && (
          <LogoMark>
            <TvLogo />
          </LogoMark>
        )}
        <PlotMark style={{ left: config.boltX - config.x }}>
          <BoltIcon />
        </PlotMark>
      </Plot>
      <PriceAxis>
        {config.prices.map((p) => (
          <PriceLabel key={p.y} $bold={p.bold} $nudge={config.nudge} style={{ top: p.y - TOP }}>
            {p.text}
          </PriceLabel>
        ))}
        {config.priceTags.map((t) => (
          <PriceTag key={t.y} style={{ top: t.y - TOP }}>
            {t.text}
          </PriceTag>
        ))}
        <PriceStack style={{ top: config.stack.y - TOP }}>
          {config.stack.rows.map((row, i) =>
            i === 1 ? <StackDim key={row}>{row}</StackDim> : <div key={row}>{row}</div>
          )}
        </PriceStack>
      </PriceAxis>
      <TimeAxis>
        {config.times.map((t) => (
          <TimeLabel key={t.x} $bold={t.bold} style={{ left: t.x - config.x }}>
            {t.text}
          </TimeLabel>
        ))}
        <TimeTag style={{ left: config.tagX - config.x, width: config.tagWidth }}>
          <span>lun 24 Ago '26</span>
          <span>21:00</span>
        </TimeTag>
      </TimeAxis>
      <AxisCorner>
        <GearIcon />
      </AxisCorner>
      {children}
    </Pane>
  );
};

const frames = ["15m", "30m", "1h", "2h", "3h", "4h", "6h", "8h", "12h", "D", "2D", "3D", "4D", "8D", "14D", "S", "M", "3M", "6M", "12M"];
const ranges = ["1D", "5D", "1M", "3M", "6M", "YTD", "1A", "5A", "Todos"];

const floatingTools = [
  <TrendLineIcon key="trend" />,
  <RayIcon key="ray" />,
  <MidLineIcon key="mid" />,
  <FibIcon key="fib" letter="s" />,
  <ZigzagIcon key="zig" />,
  <RectIcon key="rect" />,
  <FibIcon key="lines" letter="L" />,
  <VLineIcon key="vline" />,
  <DownIcon key="down" />,
  <UpIcon key="up" />,
  <TextIcon key="text" />,
];

function App() {
  return (
    <Page>
      <GlobalStyle />
      <TabBar>
        <Tab $w={186} $active>
          <CoinRow>
            <CoinBack><FlagUS size={9} /></CoinBack>
            <CoinFront><FlagUK /></CoinFront>
          </CoinRow>
          <TabText>
            <TabSymbol>GBPUSD</TabSymbol>
            <Arrow>▼</Arrow>
            <TabPrice>1,36428</TabPrice>
            <TabChange>−0.02%</TabChange>
          </TabText>
          <TabClose><X size={14} strokeWidth={1.4} /></TabClose>
        </Tab>
        <Tab $w={186}>
          <FlagUS />
          <TabText>
            <TabSymbol>MNQ1!</TabSymbol>
            <Arrow>▼</Arrow>
            <TabPrice>29.181,50</TabPrice>
            <TabChange>−0,7%</TabChange>
          </TabText>
          <TabClose><X size={14} strokeWidth={1.4} /></TabClose>
        </Tab>
        <Tab $w={190}>
          <DollarCoin>S</DollarCoin>
          <TabText>
            <TabSymbol>DXY</TabSymbol>
            <Arrow $up>▲</Arrow>
            <TabPrice>98,923</TabPrice>
            <TabChange $up>+0.08%</TabChange>
            <TabPrice>/ CL</TabPrice>
          </TabText>
          <TabClose><X size={14} strokeWidth={1.4} /></TabClose>
        </Tab>
        <Tab $w={184}>
          <FlagUS />
          <TabText>
            <TabSymbol>MNQ1!</TabSymbol>
            <Arrow>▼</Arrow>
            <TabPrice>29.181,50</TabPrice>
            <TabChange>−0,7%</TabChange>
          </TabText>
          <TabClose><X size={14} strokeWidth={1.4} /></TabClose>
        </Tab>
        <Tab $w={186}>
          <TabText>
            <TabSymbol>Configuración del usuario de T</TabSymbol>
          </TabText>
          <TabClose><X size={14} strokeWidth={1.4} /></TabClose>
        </Tab>
        <TabAdd><Plus size={15} strokeWidth={1.2} /></TabAdd>
        <TabBarEnd>
          <MonitorIcon />
          <TabBarDivider />
          <MoreDots><MoreDot /><MoreDot /><MoreDot /></MoreDots>
        </TabBarEnd>
      </TabBar>

      <Toolbar>
        <AvatarWrap>
          <Avatar>Y</Avatar>
          <AvatarBadge>11</AvatarBadge>
        </AvatarWrap>
        <SymbolPill>
          GBPUSD
          <SymbolGem><GemIcon /></SymbolGem>
        </SymbolPill>
        <AddCircle><Plus size={11} strokeWidth={1.2} /></AddCircle>
        <Separator $gap={0} />
        <Frames>
          {frames.map((f, i) => (
            <Frame key={f} $on={i === 0}>{f}</Frame>
          ))}
        </Frames>
        <ToolIcon $w={16}><MenuChevron /></ToolIcon>
        <Separator />
        <ToolIcon><CandlesIcon /></ToolIcon>
        <Separator />
        <ToolIcon><IndicatorIcon /></ToolIcon>
        <ToolIcon $w={16}><MenuChevron /></ToolIcon>
        <ToolIcon $ml={3}><LayoutIcon /></ToolIcon>
        <Separator />
        <ToolIcon><AlarmIcon /></ToolIcon>
        <ToolIcon $ml={1}><RewindIcon /></ToolIcon>
        <ToolIcon $w={16} $ml={2}><MenuChevron /></ToolIcon>
        <Separator />
        <ToolIcon><UndoIcon /></ToolIcon>
        <ToolIcon $faded><RedoIcon /></ToolIcon>
        <ToolIcon $ml={3}><SplitIcon /></ToolIcon>
        <GuideMark><GuideTick />Gua</GuideMark>
        <TradeButton>Operar</TradeButton>
        <PublishButton>Publicar</PublishButton>
      </Toolbar>

      <Body>
        <LeftRail>
          <RailButton $state="dark"><CrossIcon /></RailButton>
          <RailButton><RayIcon /></RailButton>
          <RailButton><ChannelIcon /></RailButton>
          <RailButton><PatternIcon /></RailButton>
          <RailButton><FibIcon /></RailButton>
          <RailButton><RectIcon /></RailButton>
          <RailButton><TextIcon /></RailButton>
          <RailButton><SmileIcon /></RailButton>
          <RailLine />
          <RailButton><RulerIcon /></RailButton>
          <RailButton><ZoomIcon /></RailButton>
          <RailLine />
          <RailButton $state="light"><MagnetIcon /></RailButton>
          <RailButton><PencilLockIcon /></RailButton>
          <RailButton><LockOpenIcon /></RailButton>
          <RailButton><Eye size={21} strokeWidth={1.1} /></RailButton>
          <RailButton $state="light"><LinkIcon /></RailButton>
          <RailLine />
          <RailButton><TrashIcon /></RailButton>
          <RailBottom>
            <RailButton $state="light"><Star size={20} strokeWidth={1.1} /></RailButton>
          </RailBottom>
        </LeftRail>

        <Center>
          <Charts>
            <ChartPane config={leftChart} />
            <ChartPane config={rightChart}>
              <FloatingBar>
                <Grip>
                  {Array.from({ length: 8 }, (_, i) => <GripDot key={i} />)}
                </Grip>
                {floatingTools.map((tool) => (
                  <FloatingItem key={tool.key}>{tool}</FloatingItem>
                ))}
              </FloatingBar>
            </ChartPane>
          </Charts>
          <BottomBar>
            {ranges.map((r) => <Range key={r}>{r}</Range>)}
            <Separator $gap={0} />
            <ToolIcon $ml={4}><RangeCalendarIcon /></ToolIcon>
            <BottomClock>09:16:17 UTC+2</BottomClock>
            <Separator />
            <ToolIcon><ExpandIcon /></ToolIcon>
          </BottomBar>
        </Center>

        <RightRail>
          <SideIcon><ListBookIcon /></SideIcon>
          <SideIcon><TimerIcon /><SideBadge>50</SideBadge></SideIcon>
          <SideIcon><LayersIcon /></SideIcon>
          <SideIcon><ChatIcon /></SideIcon>
          <SideBottom>
            <SideIcon><RadarIcon /></SideIcon>
            <SideIcon><PyramidIcon /></SideIcon>
            <SideIcon><CalendarIcon /></SideIcon>
            <SideIcon><Rss size={22} strokeWidth={1.1} /></SideIcon>
            <SideIcon><Bell size={22} strokeWidth={1.1} /></SideIcon>
            <GridButton>
              {Array.from({ length: 9 }, (_, i) => <GridDot key={i} />)}
            </GridButton>
            <SideLine />
            <SideIcon><HelpIcon /></SideIcon>
          </SideBottom>
        </RightRail>
      </Body>
    </Page>
  );
}

export default App;
